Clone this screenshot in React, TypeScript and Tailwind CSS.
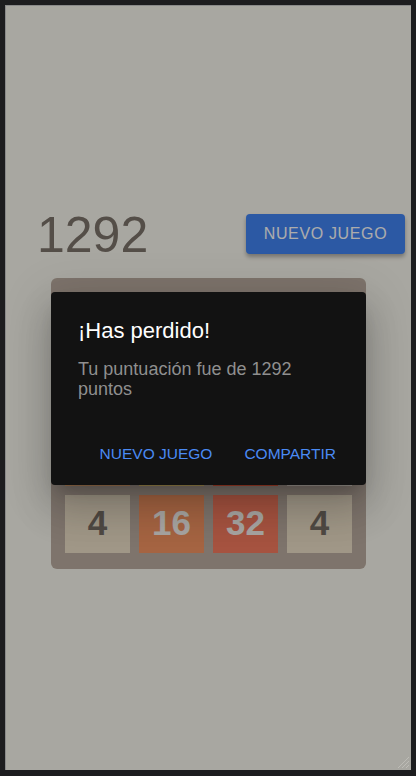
import React from "react";

type Tile = { v: number; bg: string; fg: string };

const T = (v: number): Tile => {
  const map: Record<number, [string, string]> = {
    2: ["#eee4da", "#776e65"],
    4: ["#ede0c8", "#776e65"],
    8: ["#f2b179", "#f9f6f2"],
    16: ["#f59563", "#f9f6f2"],
    32: ["#f67c5f", "#f9f6f2"],
    64: ["#f65e3b", "#f9f6f2"],
    128: ["#edcf72", "#f9f6f2"],
    256: ["#edcc61", "#f9f6f2"],
  };
  const [bg, fg] = map[v];
  return { v, bg, fg };
};

const rows: Tile[][] = [
  [T(2), T(8), T(4), T(2)],
  [T(8), T(64), T(256), T(16)],
  [T(8), T(128), T(64), T(2)],
  [T(4), T(16), T(32), T(4)],
];

const rowGap = ["mt-0", "mt-[10px]", "mt-[10px]", "mt-[9px]"];

export default function App() {
  return (
    <div
      className="w-[416px] h-[776px] bg-[#1d1d1f] pt-[5px] pl-[5px] pr-[5px] pb-[6px]"
      style={{ fontFamily: '"Liberation Sans", Arial, sans-serif' }}
    >
      <div className="relative h-full w-full border-l border-t border-[#8a8a8a] bg-[#faf8ef] overflow-hidden">
        <div className="flex h-full flex-col items-center justify-center pb-[4px]">
          <div className="flex w-full items-center justify-between pl-[31px] pr-[6px] h-[60px]">
            <div className="text-[50px] leading-[60px] text-[#7d746b] pt-[2px]">1292</div>
            <button className="h-[40px] w-[159px] rounded-[4px] bg-[#4285f4] text-[16px] tracking-[0.04em] text-white shadow-[0_3px_4px_rgba(0,0,0,0.3)]">
              NUEVO JUEGO
            </button>
          </div>
          <div className="mt-[14px] flex w-[315px] flex-col rounded-[6px] bg-[#bbada0] pl-[14px] pr-[14px] pt-[14px] pb-[16px]">
            {rows.map((r, i) => (
              <div key={i} className={`flex gap-[9px] ${rowGap[i]}`}>
                {r.map((t, j) => (
                  <div
                    key={j}
                    className="flex h-[58px] w-[65px] items-center justify-center text-[35px] font-bold"
                    style={{ backgroundColor: t.bg, color: t.fg }}
                  >
                    {t.v}
                  </div>
                ))}
              </div>
            ))}
          </div>
        </div>

        <div className="absolute inset-0 flex items-center justify-center bg-black/[0.324]">
          <div className="h-[193px] w-[315px] rounded-[4px] bg-[#121212] pt-[26px] shadow-[0_11px_15px_-7px_rgba(0,0,0,0.2),0_24px_38px_3px_rgba(0,0,0,0.14),0_9px_46px_8px_rgba(0,0,0,0.12)]">
            <div className="pl-[27px] pr-[26px] text-[22px] leading-[25px] text-white">¡Has perdido!</div>
            <div className="mt-[16px] pl-[27px] pr-[26px] text-[18px] leading-[20px] text-[#8f8f8f]">
              Tu puntuación fue de 1292 puntos
            </div>
            <div className="mt-[37px] flex justify-end gap-[16px] pr-[22px]">
              <button className="h-[36px] px-[8px] text-[15.5px] text-[#4a8af4]">NUEVO JUEGO</button>
              <button className="h-[36px] px-[8px] text-[15.5px] text-[#4a8af4]">COMPARTIR</button>
            </div>
          </div>
        </div>

        <svg
          className="absolute bottom-[1px] right-[1px]"
          width="14"
          height="14"
          viewBox="0 0 14 14"
        >
          <line x1="13" y1="2" x2="2" y2="13" stroke="#bdbcb6" strokeWidth="1" />
          <line x1="13" y1="6" x2="6" y2="13" stroke="#bdbcb6" strokeWidth="1" />
          <line x1="13" y1="10" x2="10" y2="13" stroke="#bdbcb6" strokeWidth="1" />
        </svg>
      </div>
    </div>
  );
}
